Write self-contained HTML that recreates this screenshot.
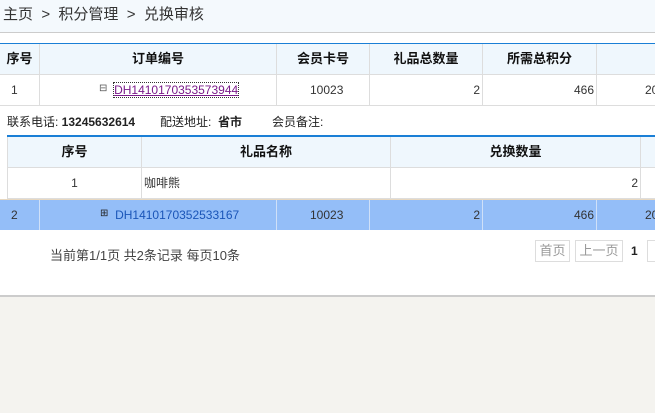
<!DOCTYPE html>
<html><head><meta charset="utf-8"><style>
*{margin:0;padding:0;box-sizing:border-box}
body{width:655px;height:413px;overflow:hidden;background:#f4f3ef;font-family:"Liberation Sans","Noto Sans CJK SC",sans-serif;font-size:12px;color:#222;position:relative}
.a{position:absolute}
.crumb{left:0;top:0;width:655px;height:33px;background:#f4f9fd;border-bottom:1px solid #ccc;font-size:15px;color:#333;line-height:30px;padding-left:3px}
.main{left:0;top:33px;width:655px;height:264px;background:#fff;border-bottom:2px solid #ccc}
.hd{background:#eff7fd;font-weight:bold;text-align:center;color:#111;font-size:13px}
.c{position:absolute;border-right:1px solid #ddd;border-bottom:1px solid #ddd;line-height:30px;white-space:nowrap;overflow:hidden}
.n{font-family:"Liberation Sans","Noto Sans CJK SC",sans-serif;font-size:12px;color:#333}
.sel{background:#94bef8}
.btn{position:absolute;top:240px;height:22px;border:1px solid #ddd;color:#999;font-size:13px;line-height:20px;text-align:center;background:#fff}
</style></head><body>
<div class="a crumb">主页 &nbsp;&gt;&nbsp; 积分管理 &nbsp;&gt;&nbsp; 兑换审核</div>
<div class="a main"></div>
<div class="a" style="left:0;top:43px;width:655px;border-top:2px solid #1a7fd6"></div>
<div class="c hd" style="left:0;top:44px;width:40px;height:31px">序号</div>
<div class="c hd" style="left:40px;top:44px;width:237px;height:31px">订单编号</div>
<div class="c hd" style="left:277px;top:44px;width:93px;height:31px">会员卡号</div>
<div class="c hd" style="left:370px;top:44px;width:113px;height:31px">礼品总数量</div>
<div class="c hd" style="left:483px;top:44px;width:114px;height:31px">所需总积分</div>
<div class="c hd" style="left:597px;top:44px;width:60px;height:31px"></div>
<div class="c n" style="left:0;top:75px;width:40px;height:31px;padding-left:11px">1</div>
<div class="c n" style="left:40px;top:75px;width:237px;height:31px;padding-left:59px"><span style="font-size:10px;position:relative;top:-3px;color:#555">⊟</span> &nbsp;<span style="color:#7a1a8a;text-decoration:underline;outline:1px dotted #333">DH1410170353573944</span></div>
<div class="c n" style="left:277px;top:75px;width:93px;height:31px;padding-left:33px">10023</div>
<div class="c n" style="left:370px;top:75px;width:113px;height:31px;text-align:right;padding-right:2px">2</div>
<div class="c n" style="left:483px;top:75px;width:114px;height:31px;text-align:right;padding-right:2px">466</div>
<div class="c n" style="left:597px;top:75px;width:60px;height:31px;padding-left:48px">20</div>
<div class="a" style="left:7px;top:113px;font-size:12px;color:#222">联系电话: <b>13245632614</b></div>
<div class="a" style="left:160px;top:113px;font-size:12px;color:#222">配送地址: &nbsp;<b>省市</b></div>
<div class="a" style="left:272px;top:113px;font-size:12px;color:#222">会员备注:</div>
<div class="a" style="left:7px;top:135px;width:648px;border-top:2px solid #1a7fd6"></div>
<div class="c hd" style="left:7px;top:137px;width:135px;height:31px;border-left:1px solid #ddd">序号</div>
<div class="c hd" style="left:142px;top:137px;width:249px;height:31px">礼品名称</div>
<div class="c hd" style="left:391px;top:137px;width:250px;height:31px">兑换数量</div>
<div class="c hd" style="left:641px;top:137px;width:20px;height:31px"></div>
<div class="c n" style="left:7px;top:168px;width:135px;height:31px;text-align:center;border-left:1px solid #ddd">1</div>
<div class="c" style="left:142px;top:168px;width:249px;height:31px;padding-left:2px;color:#333">咖啡熊</div>
<div class="c n" style="left:391px;top:168px;width:250px;height:31px;text-align:right;padding-right:2px">2</div>
<div class="c" style="left:641px;top:168px;width:20px;height:31px"></div>
<div class="a sel" style="left:0;top:199px;width:655px;height:31px;border-top:1px solid #e8d8c0"></div>
<div class="c n sel" style="left:0;top:200px;width:40px;height:30px;padding-left:11px;border-right:1px solid #cfe0f8;border-bottom:none">2</div>
<div class="c n sel" style="left:40px;top:200px;width:237px;height:30px;padding-left:60px;border-right:1px solid #cfe0f8;border-bottom:none"><span style="font-size:10px;position:relative;top:-3px;color:#222">⊞</span> &nbsp;<span style="color:#1a55b8">DH1410170352533167</span></div>
<div class="c n sel" style="left:277px;top:200px;width:93px;height:30px;padding-left:33px;border-right:1px solid #cfe0f8;border-bottom:none">10023</div>
<div class="c n sel" style="left:370px;top:200px;width:113px;height:30px;text-align:right;padding-right:2px;border-right:1px solid #cfe0f8;border-bottom:none">2</div>
<div class="c n sel" style="left:483px;top:200px;width:114px;height:30px;text-align:right;padding-right:2px;border-right:1px solid #cfe0f8;border-bottom:none">466</div>
<div class="c n sel" style="left:597px;top:200px;width:60px;height:30px;padding-left:48px;border-bottom:none">20</div>
<div class="a" style="left:50px;top:245px;font-size:13px;color:#444">当前第1/1页 共2条记录 每页10条</div>
<div class="btn" style="left:535px;width:35px">首页</div>
<div class="btn" style="left:575px;width:48px">上一页</div>
<div class="a" style="left:631px;top:244px;font-weight:bold;font-size:12px;color:#222">1</div>
<div class="btn" style="left:647px;width:20px"></div>
</body></html>
